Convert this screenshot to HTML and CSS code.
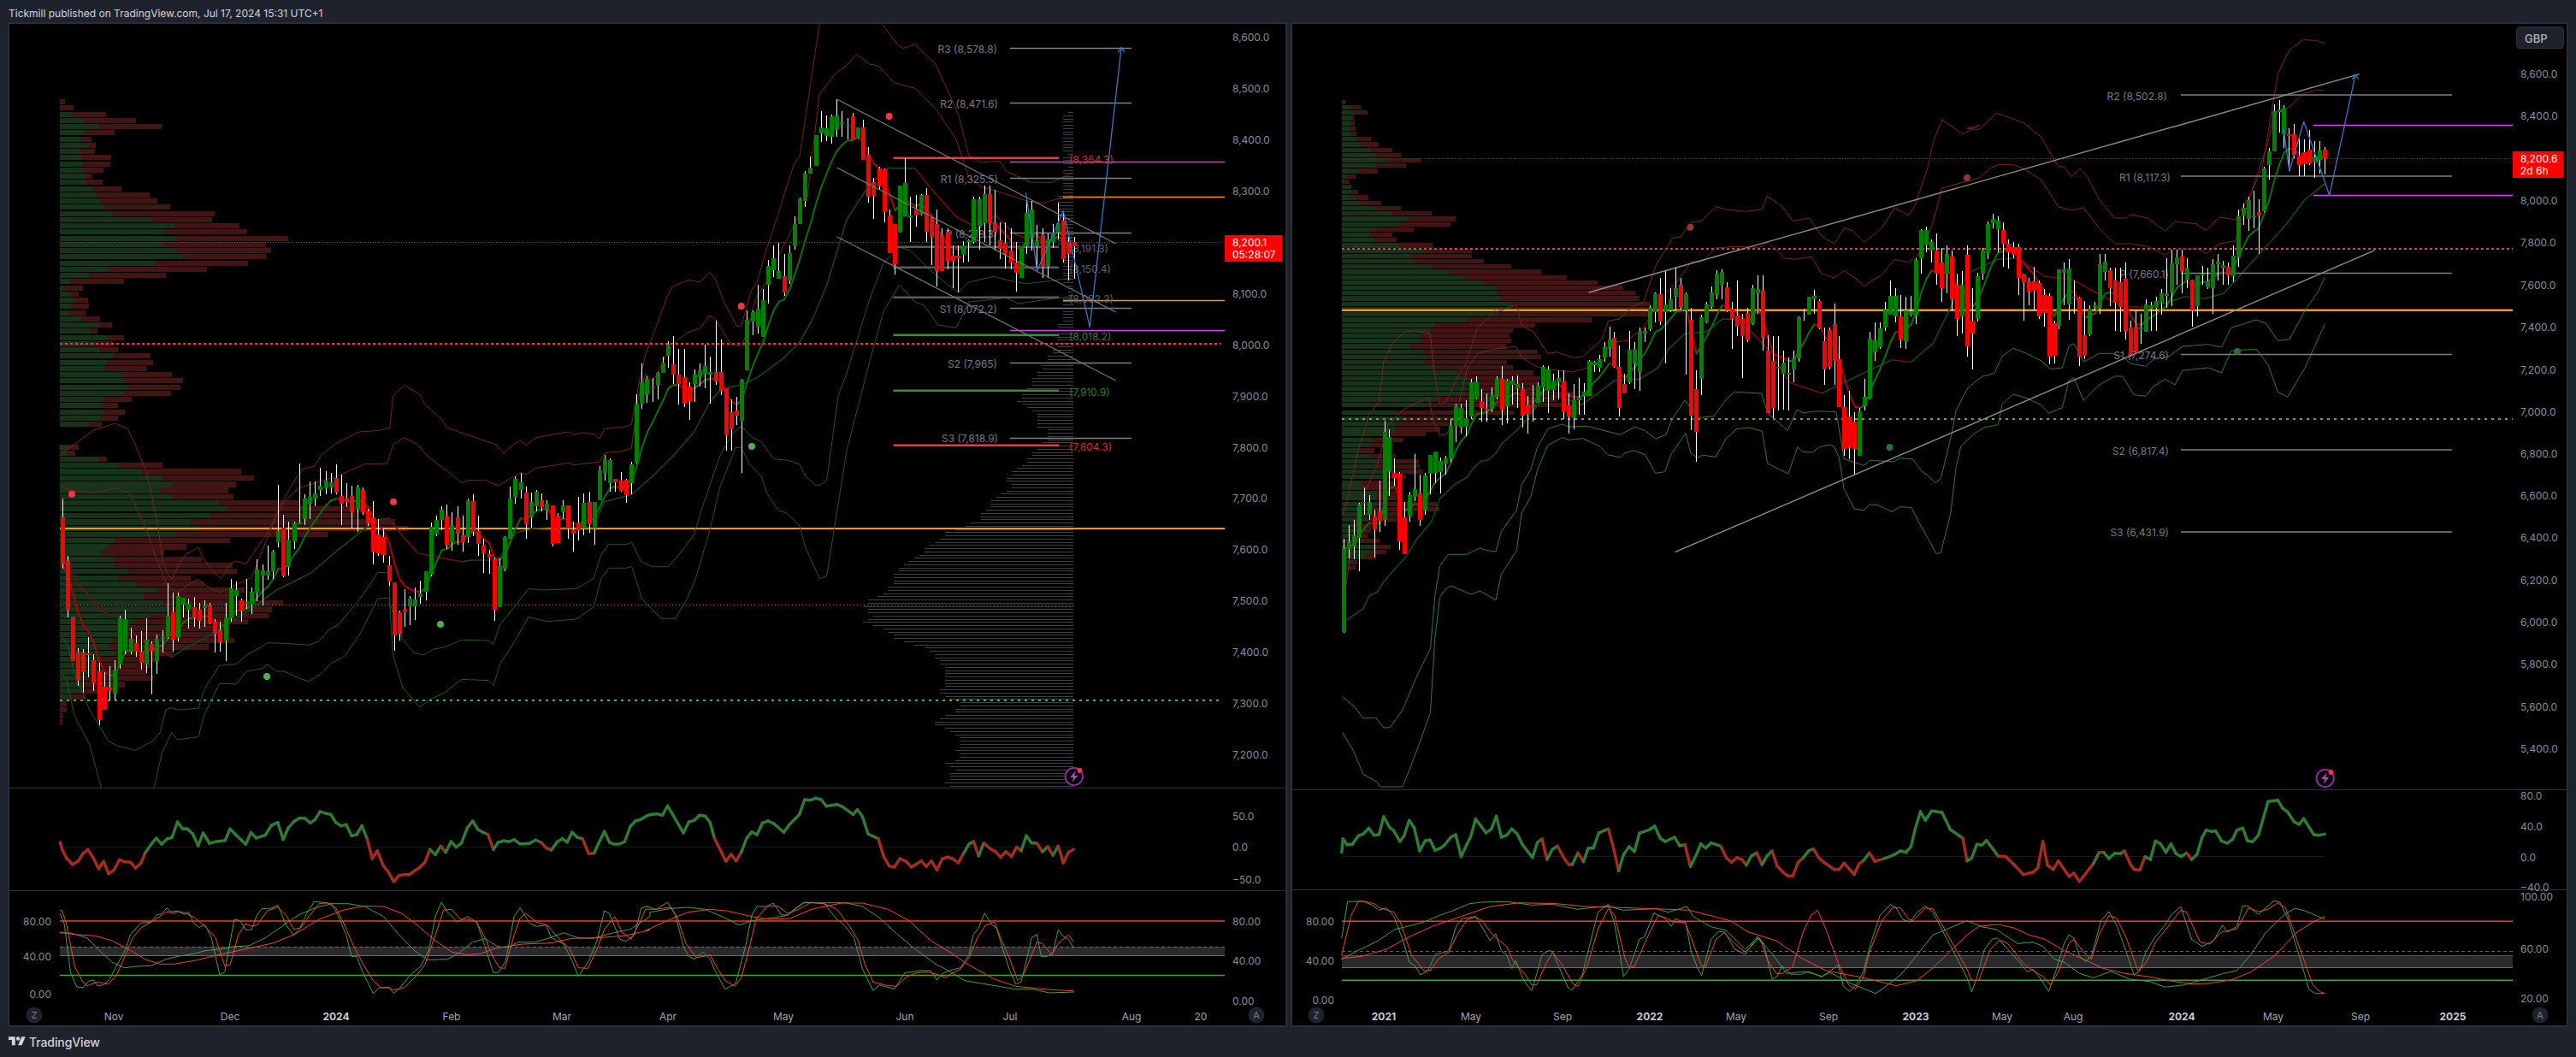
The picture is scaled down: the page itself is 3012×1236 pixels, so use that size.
FILE: index.html
```html
<!DOCTYPE html>
<html lang="en">
<head>
<meta charset="utf-8">
<title>Tickmill published on TradingView.com</title>
<link rel="stylesheet" href="styles.css">
</head>
<body>
<header class="topbar">Tickmill published on TradingView.com, Jul 17, 2024 15:31 UTC+1</header>
<main class="workspace">
  <section class="panel panel-left">
    <svg class="chart" viewBox="10 27 1494 1173" width="1494" height="1173" xmlns="http://www.w3.org/2000/svg">
      <defs>
        <clipPath id="clip-left"><rect x="10" y="27" width="1422" height="894"/></clipPath>
      </defs>
      <g id="left-under" clip-path="url(#clip-left)"></g>
      <g class="pivot-labels">
        <text x="1166" y="57">R3 (8,578.8)</text>
        <text x="1167" y="121">R2 (8,471.6)</text>
        <text x="1167" y="209">R1 (8,325.5)</text>
        <text x="1166" y="273">P (8,218.3)</text>
        <text x="1166" y="361">S1 (8,072.2)</text>
        <text x="1166" y="425">S2 (7,965)</text>
        <text x="1167" y="512">S3 (7,818.9)</text>
      </g>
      <g class="level-labels">
        <text class="lv-red" x="1250" y="186">(8,364.3)</text>
        <text class="lv-gray" x="1250" y="290">(8,191.3)</text>
        <text class="lv-gray" x="1250" y="314">(8,150.4)</text>
        <text class="lv-gray" x="1250" y="349">(8,092.3)</text>
        <text class="lv-green" x="1250" y="393">(8,018.2)</text>
        <text class="lv-green" x="1250" y="458">(7,910.9)</text>
        <text class="lv-red" x="1250" y="522">(7,804.3)</text>
      </g>
      <g id="left-over" clip-path="url(#clip-left)"></g>
      <g id="left-panes"></g>
      <g class="axis">
        <text x="1441" y="43">8,600.0</text><text x="1441" y="103">8,500.0</text><text x="1441" y="163">8,400.0</text>
        <text x="1441" y="223">8,300.0</text><text x="1441" y="343">8,100.0</text><text x="1441" y="403">8,000.0</text>
        <text x="1441" y="463">7,900.0</text><text x="1441" y="523">7,800.0</text><text x="1441" y="582">7,700.0</text>
        <text x="1441" y="642">7,600.0</text><text x="1441" y="702">7,500.0</text><text x="1441" y="762">7,400.0</text>
        <text x="1441" y="822">7,300.0</text><text x="1441" y="882">7,200.0</text>
        <text x="1441" y="954">50.0</text><text x="1441" y="990">0.0</text><text x="1441" y="1028">−50.0</text>
        <text x="1441" y="1077">80.00</text><text x="1441" y="1123">40.00</text><text x="1441" y="1170">0.00</text>
        <text class="end" x="60" y="1077">80.00</text><text class="end" x="60" y="1118">40.00</text><text class="end" x="60" y="1162">0.00</text>
      </g>
      <rect class="tag" x="1432" y="275" width="67" height="31"/>
      <text class="tag-text" x="1441" y="283">8,200.1</text>
      <text class="tag-text" x="1441" y="297">05:28:07</text>
      <g class="timeaxis">
        <text x="133" y="1188">Nov</text><text x="269" y="1188">Dec</text><text class="year" x="393" y="1188">2024</text>
        <text x="528" y="1188">Feb</text><text x="657" y="1188">Mar</text><text x="781" y="1188">Apr</text>
        <text x="916" y="1188">May</text><text x="1058" y="1188">Jun</text><text x="1181" y="1188">Jul</text>
        <text x="1323" y="1188">Aug</text><text x="1404" y="1188">20</text>
      </g>
      <g class="round-btn"><circle cx="40" cy="1187" r="9.5"/><text x="40" y="1187">Z</text></g>
      <g class="round-btn"><circle cx="1469" cy="1187" r="9.5"/><text x="1469" y="1187">A</text></g>
    </svg>
  </section>
  <section class="panel panel-right">
    <svg class="chart" viewBox="1510 27 1492 1173" width="1492" height="1173" xmlns="http://www.w3.org/2000/svg">
      <defs>
        <clipPath id="clip-right"><rect x="1510" y="27" width="1428" height="896"/></clipPath>
      </defs>
      <g id="right-under" clip-path="url(#clip-right)"></g>
      <g class="pivot-labels">
        <text x="2534" y="112">R2 (8,502.8)</text>
        <text x="2538" y="207">R1 (8,117.3)</text>
        <text x="2536" y="320">P (7,660.1)</text>
        <text x="2536" y="415">S1 (7,274.6)</text>
        <text x="2536" y="527">S2 (6,817.4)</text>
        <text x="2536" y="622">S3 (6,431.9)</text>
      </g>
      <g id="right-over" clip-path="url(#clip-right)"></g>
      <g id="right-panes"></g>
      <g class="axis">
        <text x="2947" y="86">8,600.0</text><text x="2947" y="135">8,400.0</text><text x="2947" y="234">8,000.0</text>
        <text x="2947" y="283">7,800.0</text><text x="2947" y="333">7,600.0</text><text x="2947" y="382">7,400.0</text>
        <text x="2947" y="432">7,200.0</text><text x="2947" y="481">7,000.0</text><text x="2947" y="530">6,800.0</text>
        <text x="2947" y="579">6,600.0</text><text x="2947" y="628">6,400.0</text><text x="2947" y="678">6,200.0</text>
        <text x="2947" y="727">6,000.0</text><text x="2947" y="776">5,800.0</text><text x="2947" y="826">5,600.0</text>
        <text x="2947" y="875">5,400.0</text>
        <text x="2947" y="930">80.0</text><text x="2947" y="966">40.0</text><text x="2947" y="1002">0.0</text>
        <text x="2947" y="1037">−40.0</text>
        <text x="2947" y="1048">100.00</text><text x="2947" y="1109">60.00</text><text x="2947" y="1167">20.00</text>
        <text class="end" x="1560" y="1077">80.00</text><text class="end" x="1560" y="1123">40.00</text><text class="end" x="1560" y="1169">0.00</text>
      </g>
      <rect class="tag" x="2938" y="177" width="59" height="31"/>
      <text class="tag-text" x="2947" y="185">8,200.6</text>
      <text class="tag-text" x="2947" y="199">2d 6h</text>
      <g class="timeaxis">
        <text class="year" x="1618" y="1188">2021</text><text x="1720" y="1188">May</text><text x="1827" y="1188">Sep</text>
        <text class="year" x="1929" y="1188">2022</text><text x="2030" y="1188">May</text><text x="2138" y="1188">Sep</text>
        <text class="year" x="2240" y="1188">2023</text><text x="2341" y="1188">May</text><text x="2424" y="1188">Aug</text>
        <text class="year" x="2551" y="1188">2024</text><text x="2658" y="1188">May</text><text x="2760" y="1188">Sep</text>
        <text class="year" x="2868" y="1188">2025</text>
      </g>
      <g class="round-btn"><circle cx="1539" cy="1187" r="9.5"/><text x="1539" y="1187">Z</text></g>
      <g class="round-btn"><circle cx="2970" cy="1187" r="9.5"/><text x="2970" y="1187">A</text></g>
    </svg>
    <div class="currency">GBP</div>
  </section>
</main>
<footer class="footer">
  <svg class="tv-logo" viewBox="0 0 36 28" width="20" height="15.5" xmlns="http://www.w3.org/2000/svg"><path d="M14 22H7V11H0V4h14v18zM28 22h-8l7.5-18h8L28 22z"/><circle cx="20" cy="8" r="4"/></svg>
  <span class="tv-word">TradingView</span>
</footer>
<script src="script.js"></script>
</body>
</html>
```
FILE: styles.css
```css
* { box-sizing: border-box; }
html, body { margin: 0; padding: 0; }
body {
  width: 3012px;
  height: 1236px;
  overflow: hidden;
  background: #1e222d;
  color: #d1d4dc;
  font-family: Inter, "Liberation Sans", sans-serif;
  display: flex;
  flex-direction: column;
}
.topbar {
  height: 27px;
  flex: none;
  padding: 9px 0 0 10px;
  font-size: 12px;
  line-height: 14px;
  color: #d1d4dc;
}
.workspace {
  height: 1173px;
  flex: none;
  display: flex;
  gap: 6px;
  padding-left: 10px;
}
.panel {
  position: relative;
  height: 100%;
  background: #000;
  outline: 2px solid #2a2e39;
  outline-offset: -1px;
}
.panel-left { width: 1494px; }
.panel-right { width: 1492px; }
.chart { display: block; }
.currency {
  position: absolute;
  left: 1432px;
  top: 4px;
  width: 56px;
  height: 26px;
  padding: 5px 0 0 9px;
  font-size: 13px;
  line-height: 16px;
  font-weight: 500;
  color: #b2b5be;
  background: #1e222d;
  border: 1px solid #2a2e39;
  border-radius: 4px;
}
.footer {
  height: 36px;
  flex: none;
  display: flex;
  align-items: center;
  gap: 4px;
  padding-left: 10px;
}
.tv-logo { fill: #d1d4dc; }
.tv-word { font-size: 14px; font-weight: 500; color: #d1d4dc; letter-spacing: -0.1px; }

svg text { font-family: Inter, "Liberation Sans", sans-serif; font-size: 12px; dominant-baseline: central; }
.pivot-labels text { fill: #787b86; text-anchor: end; }
.level-labels text { font-size: 12px; }
.lv-red { fill: #c8302c; }
.lv-gray { fill: #5f6168; }
.lv-green { fill: #2e7d32; }
.axis text { fill: #8a8d96; }
.axis text.end { text-anchor: end; }
.tag { fill: #ff0000; }
.tag-text { fill: #fff; }
.timeaxis text { fill: #a3a6af; text-anchor: middle; }
.timeaxis text.year { fill: #c9ccd4; font-weight: 700; }
.round-btn circle { fill: #1e222d; }
.round-btn text { fill: #787b86; font-size: 11px; text-anchor: middle; }

.ln { fill: none; stroke-linejoin: round; stroke-linecap: round; }
.crisp { shape-rendering: crispEdges; }
```
FILE: script.js
```js
(function () {
  var NS = 'http://www.w3.org/2000/svg';
  function el(p, tag, a) {
    var e = document.createElementNS(NS, tag);
    for (var k in a) e.setAttribute(k, a[k]);
    p.appendChild(e);
    return e;
  }
  // reference crop -> page coordinates
  var Z = {
    z1: function (x, y) { return [x / 2.063, y / 3]; },
    z2: function (x, y) { return [900 + x / 2.063, y / 3]; },
    z3: function (x, y) { return [x / 2.063, 880 + y / 3]; },
    z5: function (x, y) { return [1500 + x / 2.063, y / 3]; },
    z6: function (x, y) { return [2300 + x / 2.202, y / 3]; },
    z7: function (x, y) { return [1500 + x / 2.063, 880 + y / 3]; },
    z8: function (x, y) { return [2300 + x / 2.202, 880 + y / 3]; },
    z9: function (x, y) { return [60 + x / 2.24, 520 + y / 3]; },
    z10: function (x, y) { return [600 + x / 3, 250 + y / 3]; },
    z11: function (x, y) { return [1560 + x / 2.063, 480 + y / 3]; },
    z12: function (x, y) { return [700 + x / 2.01, 900 + y / 3]; }
  };
  function pts() {
    var out = [];
    for (var i = 0; i < arguments.length; i += 2) {
      var m = Z[arguments[i]];
      arguments[i + 1].trim().split(/\s+/).forEach(function (t) {
        var v = t.split(',');
        out.push(m(+v[0], +v[1]));
      });
    }
    return out;
  }
  function pstr(p) { return p.map(function (q) { return q[0].toFixed(1) + ',' + q[1].toFixed(1); }).join(' '); }
  function poly(g, p, color, w, extra) {
    var a = { points: pstr(p), stroke: color, 'stroke-width': w, 'class': 'ln' };
    for (var k in extra || {}) a[k] = extra[k];
    return el(g, 'polyline', a);
  }
  function hline(g, x1, x2, y, color, w, dash) {
    var a = { x1: x1, x2: x2, y1: y, y2: y, stroke: color, 'stroke-width': w };
    if (dash) a['stroke-dasharray'] = dash;
    return el(g, 'line', a);
  }
  function seg(g, x1, y1, x2, y2, color, w) {
    return el(g, 'line', { x1: x1, y1: y1, x2: x2, y2: y2, stroke: color, 'stroke-width': w });
  }
  function trend(g, p, up, down, w) {
    for (var i = 1; i < p.length; i++) {
      var c = p[i][1] <= p[i - 1][1] ? up : down;
      poly(g, [p[i - 1], p[i]], c, w);
    }
  }
  function momentum(g, zoneStrs, up, down) {
    var last = null, color = up;
    zoneStrs.forEach(function (z) {
      var m = Z[z[0]];
      z[1].trim().split(/\s+/).forEach(function (t) {
        if (t === 'g') { color = up; return; }
        if (t === 'r') { color = down; return; }
        var v = t.split(',');
        var q = m(+v[0], +v[1]);
        if (last) poly(g, [last, q], color, 3.4);
        last = q;
      });
    });
  }
  function parseC(s, y0) {
    return s.trim().split(/\s+/).map(function (t) {
      var v = t.slice(1).split(',').map(Number);
      return { up: t[0] === 'g', t: y0 + v[0] / 3, b: y0 + v[1] / 3, h: y0 + v[2] / 3, l: y0 + v[3] / 3 };
    });
  }
  function candles(g, list, x0, step) {
    list.forEach(function (c, i) {
      var x = Math.round(x0 + i * step);
      el(g, 'rect', { x: x, y: Math.min(c.h, c.t), width: 1, height: Math.max(c.l, c.b) - Math.min(c.h, c.t), fill: '#fff', 'class': 'crisp' });
      el(g, 'rect', { x: x - 2, y: c.t, width: 5, height: Math.max(c.b - c.t, 1.5), fill: c.up ? '#008000' : '#ff0000', 'class': 'crisp' });
    });
  }
  function ema(list, x0, step, n) {
    var a = 2 / (n + 1), v = null, out = [];
    list.forEach(function (c, i) {
      var close = c.up ? c.t : c.b;
      v = v === null ? close : v + a * (close - v);
      out.push([x0 + i * step + 0.5, v]);
    });
    return out;
  }
  function vpRow(g, x, y, h, gw, tw) {
    if (gw > 0) el(g, 'rect', { x: x, y: y, width: gw, height: h, fill: '#183418', 'class': 'crisp' });
    if (tw > gw) el(g, 'rect', { x: x + gw, y: y, width: tw - gw, height: h, fill: '#421412', 'class': 'crisp' });
  }
  function dot(g, x, y, c) { el(g, 'ellipse', { cx: x, cy: y, rx: 4, ry: 4, fill: c }); }
  function bolt(g, x, y) {
    el(g, 'circle', { cx: x, cy: y, r: 10.2, fill: '#000', stroke: '#9c27b0', 'stroke-width': 1.8 });
    el(g, 'path', { d: 'M' + (x + 2) + ' ' + (y - 7) + 'l-6.5 8h4l-1.5 6 6.5-8h-4z', fill: '#ab47bc' });
    el(g, 'circle', { cx: x + 6.8, cy: y - 7, r: 3, fill: '#f23645' });
  }
  function blue(g, p) {
    poly(g, p, '#3a76c4', 1.3);
    var e = p[p.length - 1], x = e[0], y = e[1];
    poly(g, [[x - 3.5, y + 5], [x, y], [x + 3.5, y + 5]], '#3a76c4', 1.3);
  }

  /* ---------- LEFT CHART ---------- */
  var L9 = 'r255,418,190,435 r408,580,390,605 r603,760,603,760 r730,827,715,845 r730,797,717,870 r732,735,675,815 r755,838,735,865 r796,965,765,985 r850,930,798,930 r852,862,778,897 g792,872,755,897 g610,770,600,785 g612,722,580,735 g680,725,642,735 r697,725,670,745 r725,765,655,790 g685,770,610,800 r700,722,690,875 g680,760,665,805 g676,678,650,730 g600,675,487,680 r588,683,520,725 g532,677,520,690 g538,560,538,605 g558,580,540,645 r570,605,535,640 r580,618,555,645 g565,572,545,640 r563,628,555,630 r622,662,612,728 r652,693,620,725 g606,686,555,760 g505,610,472,620 g510,530,480,600 r545,582,540,620 g552,557,470,575 g517,560,500,593 g438,518,402,550 g442,458,420,565 g444,458,355,475 g376,443,370,470 g303,342,140,360 r292,458,245,465 g333,428,270,460 g277,338,270,365 g274,278,67,280 g190,262,175,282 g184,208,130,262 g172,188,130,215 g145,158,80,180 g127,153,92,175 g133,150,100,170 r118,167,70,175 r181,206,105,283 r190,200,135,220 r181,238,145,290 g150,225,140,305 r160,238,150,245 r235,275,225,285 r256,376,197,420 r316,381,260,390 r325,386,295,415 r423,480,390,495 r484,670,484,722 r588,663,582,688 r576,588,507,640 g541,567,530,632 g543,567,500,615 g522,533,477,558 g444,515,445,545 g287,457,272,462 g265,315,250,320 g228,265,215,300 r252,352,210,365 g286,342,238,372 r255,312,215,350 r318,342,248,375 g195,325,190,345 r198,305,175,320 r303,348,250,390 r351,381,330,450 r384,396,370,452 r403,578,395,617 g426,568,400,570 g324,436,320,445 g190,330,148,330 g120,183,112,207 g132,158,100,190 r168,278,148,330 g202,254,168,290 g165,215,158,235 r195,220,170,235 g207,227,195,265 r213,347,213,357 r249,345,240,345 g213,237,195,260 r213,293,213,330 r300,311,270,375 r276,299,183,335 g205,293,170,318 r202,278,165,310 g202,293,200,350 g90,195,75,195 g50,100,35,125 g53,135,48,165 r120,132,120,165 r125,162,95,165 r124,177,120,203 g70,135,60,175';
  var L10 = 'g666,872,632,875 g592,665,525,685 g580,632,570,662 g608,613,575,660 g558,600,555,652 g522,557,500,558 g460,497,447,540 r528,563,430,598 r565,598,475,670 r574,665,475,678 r606,657,590,722 g565,598,545,660 g550,572,525,605 g535,562,460,612 g556,563,500,665 r556,588,375,600 r556,620,440,635 r613,778,613,830 r697,755,650,832 r690,707,642,740 g583,725,578,910 g373,548,340,548 g346,378,340,425 g334,395,250,420 g304,432,265,432 g184,248,162,315 g156,197,112,222 g202,227,102,227 r220,275,140,287 g139,233,112,245 g36,114,10,125';
  var L2 = 'g700,785,693,785 g610,705,600,725 g589,608,550,585 g475,582,473,582 g448,467,390,497 g450,478,405,495 g408,480,402,505 g406,452,348,480 g430,434,390,480 g440,444,415,490 r409,488,396,490 g448,483,448,485 r448,560,420,560 r543,689,517,710 r640,687,625,767 r591,654,585,665 r593,744,590,780 r755,888,735,888 r787,927,787,962 g652,812,650,815 g643,758,555,760 g755,762,690,850 r736,755,685,795 g685,752,680,755 r685,812,660,850 r765,832,762,930 r786,950,735,1005 r826,950,800,950 r813,915,800,945 r898,915,860,1010 r898,905,860,1025 g862,893,845,920 g844,850,840,918 g700,850,690,855 g700,792,690,875 g682,782,650,850 r682,782,650,860 r783,812,665,880 r843,872,780,910 r852,892,780,942 r880,920,800,945 r921,957,850,1022 g870,975,870,975 g747,863,700,890 g736,835,705,880 g847,863,790,950 r826,935,800,975 g840,933,820,975 g816,850,785,870 g784,815,710,840 r775,910,745,922 r850,890,830,985 r850,863,830,978';
  var leftC = parseC(L9, 520).concat(parseC(L10, 250), parseC(L2, 0));

  var lu = document.getElementById('left-under');
  var lo = document.getElementById('left-over');
  var lp = document.getElementById('left-panes');

  // volume profile (left)
  [[144,157],[144,177],[172,256],[200,328],[236,390],[204,276],[196,221],[214,231],[194,229],[196,268],[198,266],[202,250],[204,223],[206,248],[220,293],[228,361],[240,380],[254,411],[272,518],[364,512],[420,578],[396,596],[424,695],[394,642],[424,654],[438,642],[372,598],[262,499],[216,400],[168,299],[154,200],[168,190],[180,213],[170,215],[164,206],[196,241],[238,270],[216,235],[262,299],[226,272],[238,285],[274,363],[258,369],[252,353],[294,415],[300,442],[310,435],[296,413],[252,318],[246,285],[250,301],[240,285],[214,246]].forEach(function (r, k) {
    vpRow(lu, 70, 116 + k * 7.25, 6.2, (r[0] - 144) / 2.063, (r[1] - 144) / 2.063);
  });
  [[0,45,72],[21,40,63],[42,120,146],[63,175,291],[85,238,497],[107,290,531],[130,316,484],[151,285,464],[173,316,477],[195,436,650],[216,458,838],[240,418,798],[262,365,900],[284,393,933],[305,326,724],[327,167,468],[349,147,354],[370,130,296],[392,162,394],[414,167,475],[435,199,486],[458,176,365],[480,222,400],[501,276,505],[523,242,477],[546,290,607],[568,300,578],[590,258,569],[612,217,515],[634,175,460],[656,180,450],[678,160,479],[700,150,412],[722,162,318],[744,125,280],[765,115,262],[787,118,250],[810,90,266],[832,85,193],[854,80,130],[876,45,90],[898,22,40],[920,22,40],[942,22,31],[964,22,29]].forEach(function (r) {
    vpRow(lu, 70, 520 + r[0] / 3, 6.2, (r[1] - 22) / 2.24, (r[2] - 22) / 2.24);
  });

  // grey fixed-range profile at the right of the left chart
  var shape = pts('z2', '720,395 710,420 708,470 712,530 712,600 710,660 695,700 703,800 700,850 715,1000 708,1100 695,1200 685,1230 655,1300 610,1380 592,1410 645,1450 655,1500').map(function (q) { return q; });
  var z4pts = '627,0 627,37 595,62 577,88 560,120 525,140 507,165 490,180 507,205 490,230 457,250 440,280 422,300 403,325 352,345 300,365 265,400 232,425 196,455 146,490 129,540 112,570 42,610 25,625 60,660 25,680 76,700 112,720 130,745 180,755 215,768 250,780 265,800 283,840 300,880 283,910 265,930 320,955 355,970 320,1000 250,1025 265,1040 300,1058 336,1080 353,1100 336,1130 353,1160 300,1175 320,1200 300,1260'.split(' ');
  z4pts.forEach(function (t) { var v = t.split(','); shape.push([1000 + v[0] / 2.8, 500 + v[1] / 3]); });
  var rngSeed = 7;
  function rnd() { rngSeed = (rngSeed * 16807) % 2147483647; return rngSeed / 2147483647; }
  for (var gy = 131; gy <= 921; gy += 3.75) {
    var lx = 1250;
    for (var s = 1; s < shape.length; s++) {
      if (shape[s][1] >= gy) {
        var f = (gy - shape[s - 1][1]) / Math.max(shape[s][1] - shape[s - 1][1], 0.01);
        lx = shape[s - 1][0] + f * (shape[s][0] - shape[s - 1][0]);
        break;
      }
    }
    var w = 1255 - lx + (rnd() - 0.5) * 4;
    w = Math.max(3, Math.round(w / 6) * 6);
    el(lu, 'rect', { x: 1255 - w, y: Math.round(gy), width: w, height: 1, fill: '#3f4045', 'class': 'crisp' });
  }

  // horizontals under candles
  hline(lu, 70, 1428, 283.5, '#c22', 1, '1 2');
  hline(lu, 70, 1428, 402, '#f23645', 2, '3 3');
  hline(lu, 70, 1428, 819, '#4caf50', 2, '3 5');
  hline(lu, 70, 1255, 707.5, '#f23645', 1, '1 3');
  hline(lu, 70, 1432, 618, '#ff9800', 2);
  // bands
  var redB = '#742321', grnB = '#225723';
  poly(lu, pts('z9', '22,0 32,25 60,0 110,-50 168,-75 200,-55 220,0 250,100 280,290 290,400 303,450 316,472 330,430 352,385 385,360 397,395 420,440 445,470 470,420 482,408 510,418 545,350 575,290 600,210 640,120 660,85 690,75 705,40 740,0 806,-45 862,-50 887,-60', 'z1', '948,1390 975,1350 1013,1385 1025,1420 1065,1470 1078,1500', 'z9', '1165,0 1185,30', 'z10', '0,810 25,795 45,812 80,785 160,770 195,765 210,775 245,767 285,773 303,790 320,755 350,750 380,750 415,740 440,600 465,490 500,400 540,290 560,255 580,247 615,232 655,240 690,205 710,230 740,310 785,395 800,393 835,270 855,240 890,120', 'z2', '21,750 35,680 60,570 72,550 120,85 125,0 262,0 272,85 310,160 322,170 350,155 400,225 455,400 480,545 510,570 555,565 570,600 630,640 680,640 730,607'), redB, 1);
  poly(lu, pts('z9', '22,140 40,158 107,170 170,152 205,170 250,300 275,400 303,490 330,520 360,490 385,472 400,490 440,520 470,500 525,465 560,345 590,250 610,200 650,150 690,135 750,110 820,68 880,66 895,0 925,-25 960,0 985,40 1040,95 1075,135 1090,125 1140,125 1170,145 1200,120', 'z10', '0,925 25,908 45,915 80,892 160,880 195,873 210,882 245,877 303,870 320,840 355,835 380,835 415,822 440,640 465,560 490,590 540,490 580,440 615,415 655,402 690,357 710,370 765,460 800,465 820,420 850,300 890,235 940,130 970,70', 'z2', '48,820 90,700 120,330 160,255 185,230 210,190 240,225 262,230 300,290 350,310 400,380 450,490 480,620 510,655 570,680 620,705 660,712 700,695 730,685'), redB, 1);
  poly(lu, pts('z9', '25,670 45,710 60,800 100,930 150,1040 170,1055 220,1072 265,1040 285,1010 300,930 315,922 330,930 385,925 400,860 440,775 485,770 510,740 555,705 565,695 610,697 675,703 700,690 730,645 750,635 790,570 815,530 855,448 885,450 887,560 920,680 950,730 975,738 1000,718 1030,710 1075,685 1145,687 1158,700 1175,630 1200,590 1250,505 1290,510 1375,505 1420,470 1440,385 1460,350 1505,350 1520,343 1545,410', 'z10', '450,1220 490,1238 545,1238 590,1185 635,1125 660,1040 725,850 770,770 800,745 840,785 870,800 915,860 965,865 1005,878 1025,920 1060,952 1075,952 1100,935 1140,640 1170,560 1250,300 1300,170', 'z2', '300,890 310,865 340,880 385,945 430,1000 455,1025 480,990 540,970 580,985 620,995 680,985 730,975'), grnB, 1);
  poly(lu, pts('z9', '25,800 40,825 60,950 100,1050 130,1200 200,1300 270,1200 290,1080 315,1010 330,1035 385,1025 400,950 440,838 485,840 510,795 555,785 565,770 590,795 610,795 650,820 675,830 710,800 730,770 770,740 810,660 855,540 885,537 895,740 920,850 965,922 990,895 1030,870 1075,823 1145,827 1158,845 1175,770 1200,720 1250,605 1300,620 1375,612 1420,570 1440,470 1460,433 1505,433 1520,427 1545,530', 'z10', '450,1350 520,1420 570,1420 610,1350 640,1280 690,1110 725,960 780,820 800,820 830,880 870,920 890,980 930,1040 960,1050 1005,1095 1025,1170 1075,1280 1100,1270 1170,830 1250,520 1300,340 1355,250 1410,310 1440,320 1490,390', 'z2', '450,1150 480,1060 570,1045 600,1065 695,1045 730,1040'), grnB, 1);
  // slow MA
  trend(lu, pts('z9', '40,420 60,470 100,530 125,575 150,597 175,600 200,640 230,680 285,720 315,745 350,715 420,665 520,580 590,510 680,450 750,370 830,285 850,265 885,258 920,320 960,380 985,388 1040,402 1075,410 1100,405 1150,405 1175,395 1215,310 1260,295', 'z10', '60,1105 130,1100 280,1100 320,1010 415,985 490,920 560,850 635,765 690,660 730,615 800,600 855,575 910,535 950,505 1005,450 1050,370 1100,250 1170,20', 'z2', '240,650 285,590 350,590 400,680 450,760 500,800 545,755 590,820 640,845 730,835'), '#0f4a10', '#6f0f0c', 1.6);
  // pivots
  [56.5, 120.5, 208.5, 272.5, 360.5, 424.5, 512.5].forEach(function (y) { hline(lu, 1181, 1323, y, '#7d7f85', 1.3); });
  hline(lu, 1181, 1432, 189.5, '#d63ae0', 1.3);
  hline(lu, 1181, 1432, 386.5, '#e040fb', 1.3);
  hline(lu, 1243, 1432, 230.5, '#ff9800', 1.3);
  hline(lu, 1243, 1432, 351.5, '#ff9800', 1.3);
  [[184.7,'#f23645'],[288.7,'#5a5a5e'],[312.7,'#5a5a5e'],[347.7,'#5a5a5e'],[391.7,'#388e3c'],[456.7,'#388e3c'],[520.7,'#f23645']].forEach(function (l) { hline(lu, 1044.5, 1238, l[0], l[1], 2.4); });

  var LX0 = 72.5, LSTEP = (1255.5 - 72.5) / 192;
  trend(lo, ema(leftC, LX0, LSTEP, 8), '#0d6e0e', '#a80404', 2);
  candles(lo, leftC, LX0, LSTEP);
  [[978.5,116,1304.7,285],[978.5,196,1304.7,365],[978.5,276.7,1304.7,445]].forEach(function (t) { seg(lo, t[0], t[1], t[2], t[3], '#77787c', 1.2); });
  blue(lo, pts('z2', '618,678 645,950 708,740 772,1147 848,167'));
  dot(lo, 1039.6, 136, '#f23645'); dot(lo, 84, 577.7, '#f23645'); dot(lo, 460, 586.7, '#f23645'); dot(lo, 866.7, 358, '#f23645');
  dot(lo, 312, 791, '#4caf50'); dot(lo, 515, 730, '#4caf50'); dot(lo, 879, 522, '#4caf50');
  bolt(lo, 1255.7, 908);
  // panes
  hline(lp, 10, 1504, 921.5, '#2f323c', 1);
  hline(lp, 10, 1504, 1041.5, '#2f323c', 1);
  hline(lp, 70, 1255, 990.5, '#15161c', 1);
  momentum(lp, [['z3', 'r 145,315 150,340 160,370 175,392 188,382 200,355 212,340 225,370 238,408 250,382 262,425 275,412 288,376 300,383 315,385 327,405 340,388 350,352 g 365,322 377,300 390,322 403,303 415,298 428,243 440,267 452,268 465,285 478,327 490,282 505,318 520,313 543,308 555,268 570,290 593,322 605,280 618,300 640,290 655,255 670,245 683,305 695,265 708,243 722,230 735,230 748,247 760,235 772,207 785,213 798,217 810,245 822,257 835,253 848,292 860,288 873,257 886,305 r 898,372 910,345 925,398 935,415 950,453 962,432 975,428 988,428 1000,415 1013,403 1025,385 1037,340 g 1050,358 1063,328 r 1075,350 g 1088,312 1100,332 1113,318 1127,265 1140,240 1153,270 1165,280 1177,287 r 1190,340 g 1202,315 1215,310 1228,313 1240,305 1253,320 1265,320 1278,318 1292,307 1305,315 r 1318,335 1330,342 g 1343,315 1356,302 1368,315 1380,280 1393,298 1405,302 r 1420,355 1433,353 g 1445,315 1458,277 1470,315 1483,322 1495,320 1507,313 1520,260 1533,240 1545,235 1560,222 1568,218'],
    ['z12', '125,157 137,155 150,160 162,127 175,160 199,222 212,183 225,178 237,160 250,163 262,185 272,240 r 287,285 299,322 311,297 323,320 335,290 g 348,240 360,218 372,228 385,187 398,180 412,190 435,220 447,195 472,157 484,105 497,107 510,100 523,105 535,128 560,122 573,130 598,157 608,140 620,165 633,225 657,242 r 670,305 683,338 695,342 708,312 722,322 735,342 758,320 770,340 782,320 795,352 808,312 820,307 832,312 845,327 857,295 g 870,262 881,252 r 893,303 g 905,257 r 920,277 932,287 945,308 957,287 970,305 982,272 993,285 g 1005,232 1017,257 1030,258 r 1043,288 g 1055,270 r 1068,300 g 1080,268 r 1092,327 1104,290 1116,280']], '#2e7d32', '#a82c1e');
  // stochastic
  hline(lp, 70, 1432, 1077, '#f23a2a', 1.4);
  hline(lp, 70, 1432, 1140.5, '#43a047', 1.4);
  el(lp, 'rect', { x: 70, y: 1107, width: 1362, height: 10.5, fill: '#2a2a2d' });
  hline(lp, 70, 1432, 1107.5, '#6a6a6f', 1, '4 3');
  hline(lp, 70, 1432, 1117.5, '#6e6e72', 1);
  poly(lp, pts('z3', '145,633 170,633 210,650 240,695 270,735 300,755 330,750 365,748 400,725 430,715 470,705 495,695 540,688 565,680 600,678 640,650 680,610 720,570 760,545 800,530 840,530 880,540 925,575 960,635 1000,695 1030,727 1080,725 1110,700 1140,665 1170,653 1200,680 1225,685 1250,665 1290,665 1320,653 1360,632 1395,650 1430,652 1480,632 1520,620 1568,575', 'z12', '120,500 170,487 210,483 250,490 290,515 330,545 360,530 400,522 440,512 480,467 580,467 620,480 660,520 700,575 740,625 790,680 830,712 860,740 940,760 980,770 1020,770 1060,783 1116,780'), '#43a047', 1);
  poly(lp, pts('z3', '145,630 180,638 230,643 270,660 310,690 350,725 385,742 420,742 470,730 520,712 590,690 660,668 710,638 770,585 830,552 880,538 925,540 970,565 1010,610 1050,660 1090,700 1130,710 1160,705 1200,685 1260,672 1330,668 1380,652 1440,650 1510,642 1568,622', 'z12', '110,565 160,530 210,500 260,490 300,495 360,515 400,525 450,522 500,490 570,468 620,468 680,490 730,530 780,600 820,635 870,685 930,735 980,760 1060,772 1116,776'), '#f44336', 1);
  poly(lp, pts('z3', '145,565 155,600 170,770 185,822 200,825 213,803 225,798 235,818 250,815 265,795 280,750 300,700 315,638 340,598 365,595 378,570 390,565 403,545 415,565 430,558 445,567 455,560 468,600 480,613 495,605 510,650 530,780 542,770 565,585 580,590 592,622 607,622 620,570 632,548 655,546 670,535 690,605 708,640 722,620 740,565 758,523 775,525 800,530 815,570 835,640 848,715 860,715 875,770 900,845 915,825 938,823 950,845 965,825 990,780 1015,750 1035,690 1050,575 1065,525 1080,560 1103,595 1127,575 1150,595 1170,680 1190,772 1203,772 1220,730 1240,575 1255,545 1278,600 1295,610 1317,605 1330,650 1360,672 1380,730 1395,785 1420,733 1440,660 1458,555 1470,565 1495,655 1510,662 1530,640 1547,545 1560,540', 'z12', '112,480 135,490 162,465 180,510 200,625 212,655 225,665 245,640 262,665 275,710 297,770 322,750 345,620 360,510 372,480 395,480 410,468 430,510 445,510 470,480 485,465 530,470 560,525 580,550 600,590 620,700 645,775 660,755 695,770 720,712 735,710 755,705 780,705 795,738 808,715 825,705 850,695 870,650 880,580 893,555 907,503 925,545 935,555 950,630 965,700 980,752 993,745 1010,640 1017,590 1030,578 1040,655 1055,655 1068,640 1080,562 1092,585 1104,595 1116,625'), '#43a047', 1);
  poly(lp, pts('z3', '145,553 150,555 160,600 180,750 200,805 210,818 235,805 260,812 280,785 300,720 320,650 340,615 370,590 400,560 428,556 450,565 470,580 495,610 520,650 542,748 555,745 575,640 592,600 607,610 620,605 645,555 670,542 690,570 708,620 725,615 745,575 770,530 790,527 810,545 830,600 850,670 875,740 900,800 918,825 935,825 950,833 975,825 1000,790 1025,745 1050,640 1070,552 1090,550 1110,585 1130,585 1150,595 1170,650 1190,720 1205,755 1218,757 1240,640 1255,580 1268,565 1295,595 1320,605 1350,655 1375,690 1395,755 1418,757 1440,690 1458,620 1483,575 1500,630 1522,655 1545,590', 'z12', '110,490 135,490 170,482 185,520 205,610 230,660 262,650 280,700 297,740 320,760 335,730 350,650 370,525 395,480 420,478 445,505 470,490 500,465 530,470 560,490 590,550 610,600 625,680 645,745 680,758 700,760 725,725 750,712 775,710 795,718 815,730 830,715 850,700 870,660 890,590 910,545 930,535 945,590 965,660 985,740 1000,715 1020,640 1030,605 1043,610 1065,650 1080,610 1104,580 1116,603'), '#f44336', 1);

  /* ---------- RIGHT CHART ---------- */
  var R11 = 'g487,778,450,780 g462,485,403,520 g438,476,385,522 g330,446,325,563 g320,323,270,365 g322,365,297,385 r373,417,348,515 r353,386,245,425 g76,385,37,405 g94,212,67,300 r220,236,168,265 r222,460,215,488 r376,503,320,503 g298,372,285,390 g276,302,153,318 r292,383,225,405 g228,350,220,365 g156,222,155,295 g144,218,144,255 g178,215,165,290 g168,185,160,225 g55,167,30,183';
  var R5 = 'g1425,1495,1415,1550 g1432,1500,1416,1520 g1467,1497,1405,1530 g1340,1462,1330,1470 g1338,1398,1320,1400 r1408,1432,1365,1480 r1435,1437,1380,1480 g1385,1435,1360,1445 g1330,1392,1320,1400 r1330,1438,1285,1490 g1335,1425,1330,1485 g1335,1350,1320,1420 g1347,1362,1318,1430 r1365,1458,1345,1500 r1423,1452,1390,1520 r1423,1426,1350,1480 g1353,1412,1340,1410 g1287,1360,1280,1410 g1297,1370,1285,1450 g1335,1368,1310,1405 g1327,1340,1298,1400 r1338,1443,1298,1470 r1423,1462,1380,1520 g1402,1468,1348,1505 g1395,1405,1327,1455 g1373,1388,1345,1455 g1265,1388,1262,1390 g1270,1280,1265,1305 g1260,1290,1245,1305 g1217,1253,1200,1268 g1190,1220,1145,1250 r1186,1288,1165,1290 r1288,1430,1212,1462 r1347,1380,1310,1380 g1228,1340,1162,1347 g1225,1275,1200,1365 g1162,1305,1150,1370 g1160,1170,1150,1200 g1080,1155,1070,1160 g1030,1095,1025,1130 r1032,1128,975,1140 g1068,1095,950,1275 g1050,1088,1010,1095 g1012,1040,935,1090 r1000,1078,975,1090 g1033,1088,1025,1313 r1122,1458,1080,1510 r1365,1515,1300,1620 g1113,1330,1105,1385 g1068,1130,1060,1135 g1025,1078,1005,1082 g960,1035,948,1050 g955,998,945,1050 r1008,1090,990,1095 r1085,1120,1060,1225 r1108,1147,985,1180 r1120,1180,1100,1325 r1098,1193,1080,1200 g1012,1137,1000,1140 g1015,1030,965,1100 r1020,1185,967,1230 r1230,1450,1175,1450 r1266,1432,1178,1468 g1288,1292,1178,1440 g1272,1312,1230,1438 g1308,1312,1255,1440 g1258,1295,1230,1340 g1113,1258,1110,1270 g1106,1110,1082,1125 g1042,1103,1040,1105 g1038,1050,1018,1100 r1055,1152,1050,1155 r1197,1295,1150,1350 r1158,1287,1150,1295 r1137,1265,1065,1350 r1260,1428,1180,1428 r1428,1575,1385,1600 r1462,1570,1370,1610 r1480,1575,1445,1665 g1443,1600,1430,1600 g1392,1425,1330,1440 g1188,1398,1165,1400 g1194,1237,1130,1265 g1152,1218,1130,1225 g1086,1150,1060,1160 g1038,1103,985,1105 g1038,1110,1010,1130 r1110,1192,1035,1220 g1090,1198,1040,1225 g1092,1103,1038,1110 g912,1108,905,1138 g808,905,805,960 g808,858,795,885 g850,880,840,920';
  var RF = 'r880,960,820,1000 r920,1010,870,1060 g890,960,860,1030 r900,1050,880,1090 r1000,1120,960,1180 g1000,1110,950,1170 r895,1215,860,1250';
  var R6 = 'r1125,1170,1010,1295 g970,1118,957,1128 g878,960,870,980 g786,887,777,910 g768,782,750,800 g773,803,760,885 r808,855,780,935 r855,885,840,942 r868,893,850,905 r868,975,855,1035 r963,990,960,1125 r988,1022,975,1070 r988,1020,935,1090 r992,1110,985,1120 r1035,1098,1015,1145 r1038,1250,1030,1278 r1133,1248,1125,1275 g945,1143,945,1155 g945,958,920,1070 g942,1068,910,1122 g1040,1044,985,1100 r1045,1250,1040,1285 r1176,1248,1055,1260 g1083,1173,1070,1178 g1072,1075,1058,1090 g928,1080,890,1100 g918,955,892,985 r948,1012,940,1075 r985,1062,940,1160 r990,1078,938,1165 r978,1162,920,1190 r1148,1248,1125,1250 r1146,1233,1085,1208 g1150,1154,1100,1205 g1068,1163,1050,1160 g1072,1082,1060,1160 g1057,1080,1040,1160 g1030,1062,1015,1105 g1030,1037,905,1080 g925,1027,875,1075 g903,927,875,1000 r900,950,875,1030 g940,980,905,1010 r982,1088,980,1145 g967,1075,965,1110 g960,964,933,1000 g988,1007,940,1015 g928,1010,910,1100 g918,928,890,985 g930,938,915,1000 r937,966,920,1000 g898,970,860,990 g760,902,735,935 g730,755,715,790 g702,767,690,810 g757,762,670,800 r745,755,700,890 g592,742,585,745 g532,580,520,630 g390,530,365,530 g385,392,352,465 g377,470,370,520 r472,474,450,600 r472,543,435,555 r547,578,490,618 r534,577,490,618 r526,572,455,580 g552,568,495,625 g528,562,495,608 r526,556,515,612';
  var rightC = parseC(R11, 480).concat(parseC(R5, 0), parseC(RF, 0), parseC(R6, 0));

  var ru = document.getElementById('right-under');
  var ro = document.getElementById('right-over');
  var rp = document.getElementById('right-panes');

  [[142,151],[163,188],[172,204],[162,171],[162,173],[162,175],[162,177],[178,213],[188,231],[210,264],[222,285],[252,332],[222,297],[184,229],[157,175],[145,161],[165,165],[165,182],[176,206],[188,237],[220,285],[262,359],[302,417],[280,404],[220,316],[208,264],[220,274],[280,361],[342,456],[308,456],[318,485],[356,551],[404,623],[442,685],[482,759],[519,821],[518,850],[524,860],[550,885],[550,890],[520,882],[444,745],[364,609],[354,555],[332,547],[332,551],[308,538],[336,615],[348,623],[342,541],[365,555],[420,605],[445,620],[450,615],[440,610],[440,700],[370,660],[350,670]].forEach(function (r, k) {
    vpRow(ru, 1569, 116.7 + k * 6.21, 5.2, (r[0] - 142) / 2.063, (r[1] - 142) / 2.063);
  });
  [[0,150,433],[20,165,290],[38,150,283],[58,145,256],[75,135,221],[95,93,167],[113,85,141],[133,60,97],[152,88,149],[170,105,204],[188,100,206],[207,135,215],[225,125,173],[245,65,150],[262,70,150],[283,100,155],[300,100,150],[320,100,248],[338,85,254],[357,85,165],[375,80,150],[395,55,90],[413,55,88],[432,50,80],[450,70,108],[470,100,136],[488,85,126],[505,72,100],[525,45,55],[543,30,50],[562,19,30]].forEach(function (r) {
    vpRow(ru, 1569, 480 + r[0] / 3, 5.2, (r[1] - 18) / 2.063, (r[2] - 18) / 2.063);
  });

  hline(ru, 1569, 2938, 185.5, '#b22222', 1, '1 2');
  hline(ru, 1569, 2938, 291, '#f23645', 2, '3 3');
  hline(ru, 1569, 2938, 490, '#4caf50', 2, '3 5');
  hline(ru, 1569, 2938, 362.7, '#ff9800', 2.6);

  var redR = '#7a2422', grnR = '#2e7a30';
  poly(ru, pts('z11', '20,365 30,320 60,130', 'z5', '200,1500 205,1460 232,1410 243,1270 265,1200 295,1165 318,1160 355,1170 365,1300 378,1415 392,1412 430,1300 440,1280 470,1150 500,1110 515,1080 525,1090 550,1075 565,1072 575,1140 605,1165 625,1210 640,1240 660,1235 700,1255 725,1250 770,1190 785,1125 810,1120 845,1075 870,1060 900,930 940,835 960,830 985,780 1010,775 1045,725 1070,735 1115,742 1155,735 1168,688 1205,725 1230,775 1270,765 1300,830 1330,855 1355,800 1375,810 1402,850 1420,830 1445,800 1475,730 1510,755 1525,720 1555,590 1568,500 1590,420 1640,470 1680,440', 'z6', '0,450 30,455 50,430 75,397 110,412 150,435 190,480 235,585 250,585 270,620 290,590 310,620 340,700 380,765 410,765 420,752 465,765 510,810 535,778 590,785 615,808 650,762 690,770 730,680 760,590 800,260 830,175 865,140 900,142 920,152'), redR, 1);
  poly(ru, pts('z11', '20,700 45,450 70,300 105,190 130,50 165,0', 'z5', '300,1430 352,1393 362,1470 379,1528 396,1522 420,1440 445,1290 470,1240 510,1225 562,1215 578,1255 610,1285 640,1295 700,1305 735,1290 775,1240 800,1200 830,1195 870,1150 905,1060 950,990 985,918 1010,918 1045,870 1090,865 1150,868 1170,848 1210,905 1235,910 1275,900 1300,960 1330,975 1355,950 1380,975 1402,1005 1420,985 1445,965 1475,910 1510,920 1530,900 1550,850 1568,780 1590,660 1640,640', 'z6', '30,625 60,590 80,578 120,578 150,595 190,630 235,725 270,738 300,728 340,800 380,855 420,855 465,865 510,895 530,875 590,870 615,890 650,855 690,845 700,810 745,620 775,500 790,400 830,375 865,330 900,315 920,318'), redR, 1);
  poly(ru, pts('z11', '20,1005 50,1040 70,1080 100,1078 120,1113 135,1112 165,1050 200,930 232,835 243,650 255,545 275,505 320,505 352,482 365,490 390,495 403,425 440,350 452,260 475,205 490,130 515,65 550,48 565,57 610,55 650,70 690,85 725,58 750,70 775,100 800,85 815,30 846,-35 881,25 916,20 946,-40 966,-65 1031,-60 1046,10 1066,35 1094,70 1116,-3 1131,8 1166,2 1211,5 1230,170 1255,182 1278,193 1292,175 1330,178 1350,180 1365,167 1395,170 1415,210 1433,230 1450,253 1463,240 1490,80 1500,0', 'z6', '0,1365 20,1340 40,1320 70,1310 90,1250 118,1222 150,1238 190,1265 215,1295 245,1290 262,1215 275,1205 300,1270 340,1240 370,1240 400,1250 420,1275 460,1285 480,1260 520,1250 555,1215 620,1208 655,1218 680,1150 745,1122 770,1135 800,1195 830,1190 870,1090 905,1020 920,975'), grnR, 1);
  poly(ru, pts('z11', '20,1130 45,1190 70,1275 105,1305 110,1320 165,1320 180,1265 205,1170 232,1060 243,800 255,655 270,625 282,615 330,645 352,633 390,665 403,575 440,492 452,360 475,300 490,210 515,122 550,95 565,103 600,98 640,125 660,155 690,165 700,150 722,140 750,155 775,220 798,215 812,155 848,80 860,150 875,165 890,157 920,163 945,100 970,65 1000,60 1032,72 1045,185 1065,200 1095,222 1118,128 1130,145 1155,146 1170,128 1195,120 1205,125 1218,165 1230,275 1255,345 1278,350 1292,330 1312,332 1345,355 1365,338 1392,340 1415,405 1435,455 1452,502 1463,500 1487,360 1500,200 1512,125 1545,80 1568,60', 'z6', '80,1490 90,1420 118,1383 150,1395 190,1420 210,1450 245,1430 262,1335 275,1325 300,1405 340,1350 380,1320 400,1320 430,1385 460,1390 480,1355 510,1330 535,1350 555,1300 620,1290 655,1308 680,1230 745,1225 775,1280 800,1375 825,1393 870,1290 921,1137'), grnR, 1);
  trend(ru, pts('z11', '20,745 70,695 85,650 105,635 120,600 150,550 175,510 200,450 235,390 255,310 290,260 320,235 340,195 355,178 370,175 390,150 405,115 440,70 465,30 480,0', 'z5', '630,1395 665,1390 720,1420 755,1385 800,1335 860,1330 905,1290 930,1225 970,1170 1020,1165 1060,1120 1100,1120 1180,1240 1220,1340 1300,1380 1420,1295 1470,1262 1515,1270 1568,1205', 'z6', '0,960 80,910 130,905 200,970 270,980 330,1025 400,1075 450,1078 520,1060 560,1040 610,1048 660,1030 700,970 760,880 820,790 870,700 921,645'), '#0f4a10', '#6f0f0c', 1.6);
  [111, 206, 319.5, 414.5, 526, 622].forEach(function (y) { hline(ru, 2550, 2867, y, '#7d7f85', 1.3); });
  hline(ru, 2705, 2938, 146.5, '#e040fb', 1.3);
  hline(ru, 2705, 2938, 228.5, '#e040fb', 1.3);

  var RX0 = 1570.7, RSTEP = (2718.3 - 1570.7) / (rightC.length - 1);
  trend(ro, ema(rightC, RX0, RSTEP, 8), '#0d6e0e', '#a80404', 2);
  candles(ro, rightC, RX0, RSTEP);
  seg(ro, 1857.7, 342, 2758.7, 86.7, '#8e8e92', 1.4);
  seg(ro, 1958.4, 645.7, 2776.8, 292.7, '#8e8e92', 1.4);
  blue(ro, pts('z6', '815,455 830,600 867,427 933,685 1000,262'));
  dot(ro, 1976.5, 265.7, '#8f3535'); dot(ro, 2300, 208, '#8f3535');
  dot(ro, 2616, 411, '#2f6b32'); dot(ro, 2209.5, 523, '#2f6b32');
  bolt(ro, 2718.7, 910);

  hline(rp, 1510, 3002, 923.5, '#2f323c', 1);
  hline(rp, 1510, 3002, 1040.5, '#2f323c', 1);
  hline(rp, 1569, 2718, 1001.5, '#15161c', 1);
  momentum(rp, [['z7', 'g 142,350 145,303 155,323 168,322 182,292 195,285 207,265 220,290 232,287 243,225 257,262 268,275 282,312 292,293 305,238 317,265 330,345 343,310 355,307 367,343 380,335 390,325 405,297 417,288 430,365 443,325 453,295 465,233 478,258 490,282 503,268 515,223 527,297 540,290 552,268 565,285 578,323 602,368 614,315 625,303 r 637,375 g 650,340 662,328 r 680,375 690,393 698,393 g 712,352 r 725,383 g 737,335 749,335 762,282 785,268 r 798,337 810,415 g 822,358 835,330 848,347 860,283 885,270 897,258 910,300 922,312 945,297 957,327 970,323 r 983,400 g 1000,350 1008,320 1020,335 1033,317 1056,328 r 1070,370 1082,385 1095,368 1107,375 1118,395 g 1130,363 1143,352 r 1156,393 g 1168,362 1180,345 r 1192,397 1205,418 1218,433 1230,433 1243,385 1255,370 g 1268,345 1280,338 r 1293,370 1305,385 1330,410 1342,410 1354,388 1378,428 1390,390 1400,380 g 1415,352 r 1428,382 1450,372 g 1475,358 1490,345 1503,350 1515,330 1525,270 1538,207 1550,238 1565,205 1590,210 1610,270 1640,300'],
    ['z8', 'r 0,380 g 12,370 25,322 38,325 50,308 65,335 80,363 r 100,365 122,395 145,428 170,420 182,405 195,312 207,395 222,410 235,380 263,435 275,423 289,452 305,425 325,390 g 340,350 r 352,350 g 365,372 380,353 395,355 405,345 r 420,390 430,410 445,412 458,365 g 472,375 485,310 498,320 512,350 525,320 538,355 552,365 565,352 r 578,375 g 592,358 605,298 616,272 630,277 640,275 655,310 670,318 683,305 695,272 710,265 722,310 735,313 750,290 775,172 800,167 812,195 825,208 842,243 855,252 867,232 893,288 905,290 921,286']], '#2e7d32', '#a82c1e');
  hline(rp, 1569, 2938, 1077.3, '#f23a2a', 1.4);
  hline(rp, 1569, 2938, 1146.3, '#43a047', 1.4);
  hline(rp, 1569, 2938, 1112.5, '#5f5f64', 1, '4 3');
  el(rp, 'rect', { x: 1569, y: 1117, width: 1369, height: 14, fill: '#2a2a2d' });
  hline(rp, 1569, 2938, 1117.5, '#555559', 1);
  hline(rp, 1569, 2938, 1131.5, '#6e6e72', 1);
  poly(rp, pts('z7', '142,725 180,695 230,660 270,620 300,610 340,595 380,570 410,555 450,530 480,525 540,523 600,535 650,532 710,550 785,538 820,553 900,548 930,560 975,540 990,575 1030,610 1070,625 1115,690 1145,650 1180,705 1215,775 1260,768 1300,785 1320,772 1370,810 1430,845 1450,825 1490,780 1530,710 1568,640', 'z8', '0,590 40,612 75,620 130,670 170,665 195,680 225,725 250,735 290,775 325,790 370,768 420,795 470,803 510,823 560,815 610,795 660,775 695,765 730,710 770,630 820,565 845,547 870,555 921,585'), '#43a047', 1);
  poly(rp, pts('z7', '142,722 190,715 250,690 300,650 360,610 430,575 500,540 570,527 660,530 730,540 800,543 900,548 980,553 1080,590 1120,628 1190,660 1250,720 1310,765 1400,790 1480,818 1530,800 1568,755', 'z8', '0,640 30,610 80,603 120,615 160,640 200,655 250,695 300,725 350,757 400,773 470,787 520,800 580,812 620,810 680,798 730,770 790,715 850,630 890,595 921,575'), '#f44336', 1);
  poly(rp, pts('z7', '142,650 156,523 195,522 215,535 232,553 250,545 268,575 290,660 305,735 320,750 332,780 350,765 368,707 385,703 400,695 418,610 432,583 465,575 490,635 500,660 513,635 527,695 540,710 552,757 562,730 578,790 590,818 601,835 625,710 640,695 650,697 670,765 688,825 698,833 722,780 760,560 785,532 800,600 822,785 835,760 860,655 872,647 895,563 920,580 937,610 947,582 972,600 985,700 1000,755 1010,782 1033,655 1050,628 1066,630 1090,690 1115,708 1145,645 1160,670 1180,795 1192,785 1205,748 1225,778 1250,778 1268,768 1300,787 1315,772 1340,745 1352,820 1367,838 1385,810 1400,770 1418,670 1440,572 1465,533 1478,542 1495,585 1513,595 1530,560 1550,538 1568,560', 'z8', '0,790 12,840 25,790 45,690 65,655 78,650 105,690 135,735 155,770 170,760 190,795 210,838 230,760 250,670 262,640 275,650 290,715 305,733 320,715 345,590 365,558 385,605 405,680 430,780 445,765 460,700 485,645 510,605 525,570 550,540 578,655 605,680 635,660 658,605 670,630 695,610 710,537 725,540 750,568 790,520 805,525 825,580 860,735 880,830 895,845 921,845'), '#43a047', 1);
  poly(rp, pts('z7', '142,710 165,570 182,522 195,522 220,530 235,545 268,560 285,600 310,710 340,765 355,765 375,725 400,700 420,640 445,585 465,577 480,590 510,645 540,680 555,730 585,780 600,815 612,815 635,740 650,700 672,740 700,812 712,820 735,745 760,620 785,548 800,570 825,720 835,755 848,750 880,645 905,572 920,578 945,595 970,595 985,650 1010,750 1020,750 1045,655 1065,632 1090,670 1115,700 1150,650 1170,730 1190,775 1205,775 1230,750 1255,630 1275,570 1290,553 1310,620 1340,740 1365,815 1380,830 1400,790 1415,700 1445,590 1470,545 1490,545 1510,585 1520,590 1550,545 1568,548', 'z8', '0,760 12,800 30,800 60,690 85,658 105,670 145,740 170,765 195,785 215,815 235,770 262,670 275,655 300,700 320,725 340,640 365,572 385,580 410,650 440,765 460,740 485,665 515,615 550,553 565,560 600,665 625,672 655,630 695,618 725,545 750,558 775,550 800,527 820,545 860,700 890,815 910,840 921,845'), '#f44336', 1);
})();
```
